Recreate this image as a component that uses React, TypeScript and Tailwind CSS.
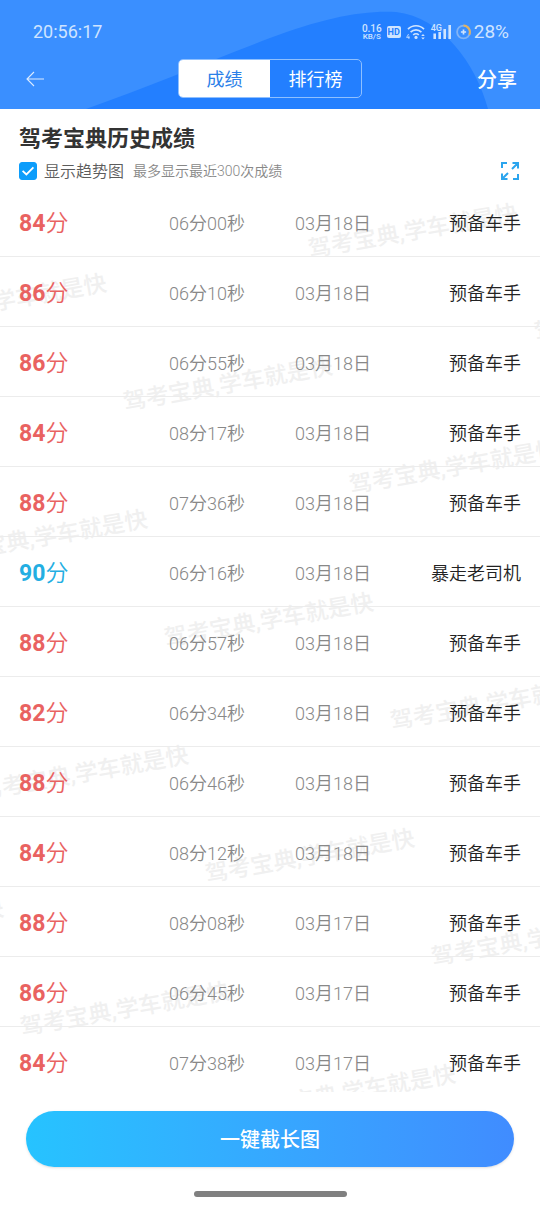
import { useState } from "react";

type RecordItem = {
  score: number;
  time: string;
  date: string;
  title: string;
};

const PASS_SCORE = 90;

const records: RecordItem[] = [
  { score: 84, time: "06分00秒", date: "03月18日", title: "预备车手" },
  { score: 86, time: "06分10秒", date: "03月18日", title: "预备车手" },
  { score: 86, time: "06分55秒", date: "03月18日", title: "预备车手" },
  { score: 84, time: "08分17秒", date: "03月18日", title: "预备车手" },
  { score: 88, time: "07分36秒", date: "03月18日", title: "预备车手" },
  { score: 90, time: "06分16秒", date: "03月18日", title: "暴走老司机" },
  { score: 88, time: "06分57秒", date: "03月18日", title: "预备车手" },
  { score: 82, time: "06分34秒", date: "03月18日", title: "预备车手" },
  { score: 88, time: "06分46秒", date: "03月18日", title: "预备车手" },
  { score: 84, time: "08分12秒", date: "03月18日", title: "预备车手" },
  { score: 88, time: "08分08秒", date: "03月17日", title: "预备车手" },
  { score: 86, time: "06分45秒", date: "03月17日", title: "预备车手" },
  { score: 84, time: "07分38秒", date: "03月17日", title: "预备车手" },
];

// Watermarks sit on a slanted grid: one step right is (226, 83),
// one step down is (41, 236). Anything fully outside the list is dropped.
const watermarks = [-1, 0, 1, 2, 3, 4]
  .flatMap((row) =>
    [-2, -1, 0, 1, 2].map((col) => ({
      x: 228 + col * 226 + row * 41,
      y: 199 + col * 83 + row * 236,
    }))
  )
  .filter(({ x, y }) => x > -105 && x < 645 && y > 0 && y < 940);

function HeaderShape() {
  return (
    <svg
      className="absolute inset-0 h-full w-full"
      viewBox="0 0 540 109"
      preserveAspectRatio="none"
      aria-hidden="true"
    >
      <path
        d="M86 109C150 86 210 61 270 38C320 19 362 10 396 12C442 17 476 64 488 109Z"
        fill="#237fff"
      />
    </svg>
  );
}

function StatusBar() {
  return (
    <div className="flex h-6 items-center justify-between pr-[31px] pl-[33px] text-[#cfe4ff]">
      <span className="text-lg leading-6">20:56:17</span>

      <div className="flex items-center gap-[5px]">
        <div className="flex flex-col items-center font-medium">
          <span className="text-[10px] leading-[9px]">0.16</span>
          <span className="text-[8px] leading-[7px]">KB/S</span>
        </div>

        <span className="flex h-3 w-[14px] items-center justify-center rounded-[2px] bg-[#cfe4ff] text-[9px] leading-3 font-bold text-[#237fff]">
          HD
        </span>

        <svg width="20" height="16" viewBox="0 0 20 16" fill="none" aria-hidden="true">
          <path
            d="M2 5.2C6.4 .6 13.6 .6 18 5.2M4.6 8.1C7.6 5 12.4 5 15.4 8.1M7.2 11C8.8 9.4 11.2 9.4 12.8 11"
            stroke="currentColor"
            strokeWidth="1.7"
          />
          <circle cx="10" cy="13.4" r="1.6" fill="currentColor" />
          <path d="M2.6 10L.6 13.4H3.6M2.9 11.8V15" stroke="currentColor" strokeWidth=".8" />
          <path d="M15.2 12L17 10L18.8 12ZM15.2 13.4L17 15.4L18.8 13.4Z" fill="currentColor" />
        </svg>

        <div className="relative">
          <svg width="20" height="16" viewBox="0 0 20 16" fill="currentColor" aria-hidden="true">
            <path d="M2.4 9.5h2.6V15H2.4zM7.4 8h2.6v7H7.4zM12.4 5h2.6v10h-2.6zM17.4 1h2.6v14h-2.6z" />
          </svg>
          <span className="absolute top-0 left-0 text-[9px] leading-[8px] font-medium">4G</span>
        </div>

        <div className="flex items-center gap-[3px]">
          <svg width="15" height="16" viewBox="0 0 15 16" fill="none" aria-hidden="true">
            <circle cx="7.5" cy="8" r="6.4" stroke="#82b4f6" strokeWidth="1.8" />
            <path d="M7.5 1.6A6.4 6.4 0 0 1 13.2 10.8" stroke="#e0b262" strokeWidth="2" />
            <path d="M7.5 5.4V10.6M4.9 8H10.1" stroke="currentColor" strokeWidth="1.7" />
          </svg>
          <span className="text-[19px] leading-6">28%</span>
        </div>
      </div>
    </div>
  );
}

function Header() {
  const [tab, setTab] = useState("成绩");

  return (
    <header className="relative bg-[#3a8fff] pt-5 pb-[11px]">
      <HeaderShape />

      <div className="relative">
        <StatusBar />

        <div className="mt-[15px] grid grid-cols-[1fr_auto_1fr] items-center px-[23px]">
          <button
            type="button"
            aria-label="返回"
            className="flex h-6 w-6 items-center justify-center text-[#dcebff]"
          >
            <svg width="18" height="16" viewBox="0 0 18 16" fill="none" aria-hidden="true">
              <path d="M8 1L1 8L8 15M1 8H18" stroke="currentColor" strokeWidth="1.1" />
            </svg>
          </button>

          <div className="flex h-[39px] w-[184px] overflow-hidden rounded-[5px] border border-[#8fc0ff]">
            {["成绩", "排行榜"].map((name) => (
              <button
                key={name}
                type="button"
                onClick={() => setTab(name)}
                className={
                  tab === name
                    ? "flex-1 bg-white pt-[2px] text-lg leading-6 text-[#2b7fe8]"
                    : "flex-1 pt-[2px] text-lg leading-6 text-white"
                }
              >
                {name}
              </button>
            ))}
          </div>

          <button
            type="button"
            className="justify-self-end pt-[2px] text-xl leading-6 font-medium text-white"
          >
            分享
          </button>
        </div>
      </div>
    </header>
  );
}

function ListHeading() {
  const [showTrend, setShowTrend] = useState(true);

  return (
    <div className="px-[19px] pt-[14px] pb-[3px]">
      <h1 className="text-[22px] leading-8 font-bold text-[#333333]">
        驾考宝典历史成绩
      </h1>

      <div className="mt-1 flex h-6 items-center">
        <label className="flex items-center gap-[7px] text-base leading-6 font-[350] text-[#5c5c5c]">
          <span className="relative flex">
            <input
              type="checkbox"
              checked={showTrend}
              onChange={(event) => setShowTrend(event.target.checked)}
              className="peer h-[18px] w-[18px] appearance-none rounded-[3px] border border-[#0c9dfb] checked:bg-[#0c9dfb]"
            />
            <svg
              className="pointer-events-none absolute inset-0 hidden peer-checked:block"
              width="18"
              height="18"
              viewBox="0 0 18 18"
              fill="none"
              aria-hidden="true"
            >
              <path d="M3.6 8.8L7.4 12.4L14.4 5.4" stroke="white" strokeWidth="1.8" />
            </svg>
          </span>
          <span className="pt-[2px]">显示趋势图</span>
        </label>

        <span className="ml-[9px] text-sm leading-6 font-[350] text-[#888888]">
          最多显示最近300次成绩
        </span>

        <button type="button" aria-label="全屏" className="ml-auto text-[#2ba5ee]">
          <svg width="22" height="18" viewBox="0 0 22 18" fill="none" aria-hidden="true">
            <path
              d="M3 6V1H8M19 12V17H14M13.5 1H19V6.5M18.5 1.5L13 7M8.5 17H3V11.5M3.5 16.5L9 11"
              stroke="currentColor"
              strokeWidth="2"
            />
          </svg>
        </button>
      </div>
    </div>
  );
}

function Watermark() {
  return (
    <div
      aria-hidden="true"
      className="pointer-events-none absolute inset-0 overflow-hidden select-none"
    >
      {watermarks.map(({ x, y }) => (
        <span
          key={`${x}-${y}`}
          style={{ left: x, top: y }}
          className="absolute -translate-x-1/2 -translate-y-1/2 -rotate-10 text-[23px] leading-8 font-medium whitespace-nowrap text-[#f0f0f0]"
        >
          驾考宝典,学车就是快
        </span>
      ))}
    </div>
  );
}

function RecordTable() {
  return (
    <div className="relative min-h-0 flex-1">
      <Watermark />

      <div className="relative h-full overflow-y-auto [scrollbar-width:none]">
        <table className="w-full table-fixed text-left text-lg leading-6">
          <colgroup>
            <col className="w-[169px]" />
            <col className="w-[126px]" />
            <col className="w-[100px]" />
            <col />
          </colgroup>
          <tbody>
            {records.map((item, index) => (
              <tr key={index} className="h-[70px] border-b border-[#ececec]">
                <td
                  className={
                    item.score >= PASS_SCORE
                      ? "pt-[6px] pl-[19px] text-[23px] font-[350] text-[#23aee2]"
                      : "pt-[6px] pl-[19px] text-[23px] font-[350] text-[#e96261]"
                  }
                >
                  <span className="font-bold">{item.score}</span>分
                </td>
                <td className="pt-[6px] font-[350] text-[#888888]">{item.time}</td>
                <td className="pt-[6px] font-[350] text-[#888888]">{item.date}</td>
                <td className="pt-[6px] pr-[19px] text-right font-[350] text-[#222222]">
                  {item.title}
                </td>
              </tr>
            ))}
          </tbody>
        </table>
      </div>
    </div>
  );
}

export default function App() {
  return (
    <div className="flex h-screen flex-col bg-white font-['Roboto','Noto_Sans_CJK_SC',sans-serif]">
      <Header />
      <ListHeading />
      <RecordTable />

      <footer className="px-[26px] pt-[19px] pb-[9px]">
        <button
          type="button"
          className="h-14 w-full rounded-full bg-linear-to-r from-[#26c3ff] to-[#408cff] pt-[2px] text-xl leading-6 font-medium text-white shadow-sm"
        >
          一键截长图
        </button>
        <div className="mx-auto mt-6 h-[6px] w-[153px] rounded-full bg-[#808080]" />
      </footer>
    </div>
  );
}
